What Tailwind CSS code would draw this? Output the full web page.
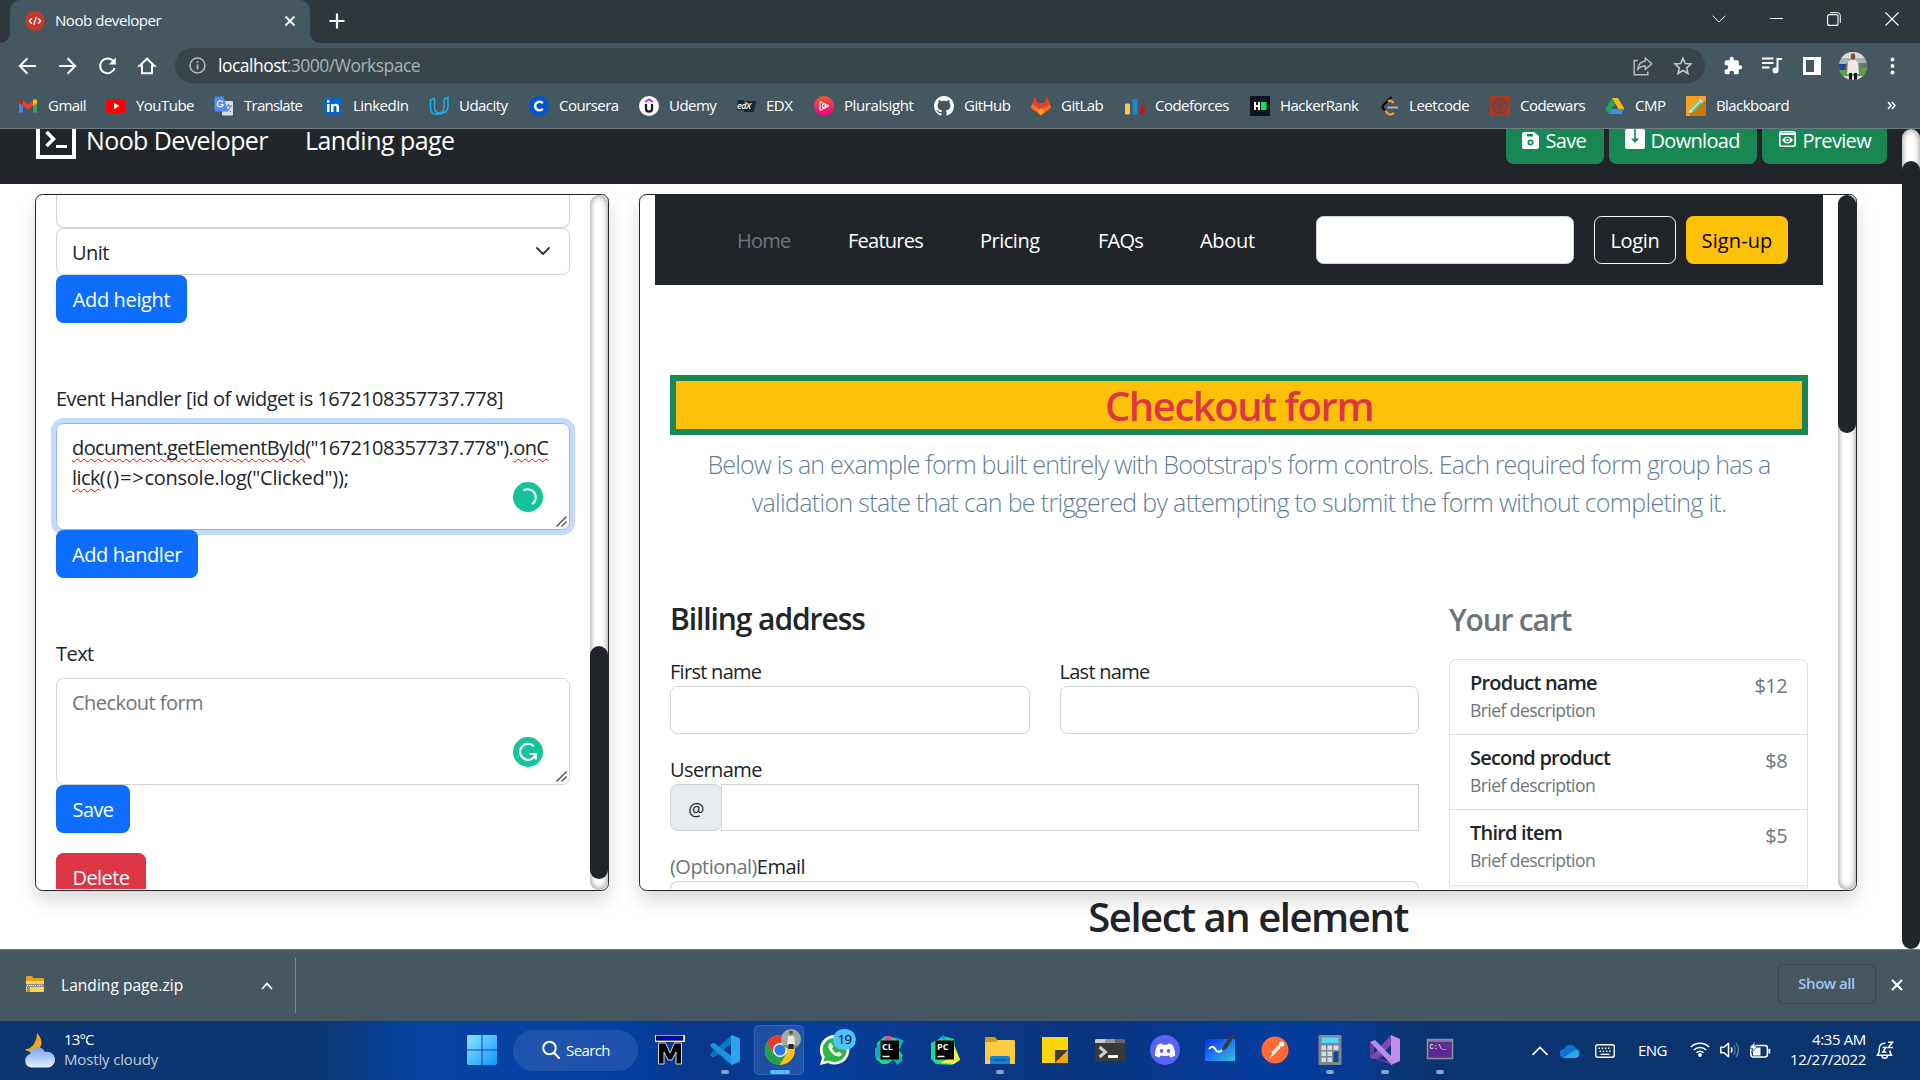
<!DOCTYPE html>
<html lang="en">
<head>
<meta charset="utf-8">
<title>Noob developer</title>
<script src="https://cdn.jsdelivr.net/npm/@tailwindcss/browser@4"></script>
</head>
<body class="w-[1920px] h-[1080px] overflow-hidden flex flex-col bg-white text-[#212529] font-['Open_Sans','Segoe_UI',sans-serif] tracking-[-0.03em] text-[20px] leading-[30px] whitespace-nowrap">

<!-- Tab strip -->
<header class="h-[43px] shrink-0 bg-[#2d373c] flex items-stretch text-white">
  <div class="w-[10px] bg-[#455760]"><div class="h-full bg-[#2d373c] rounded-br-[10px]"></div></div>
  <div class="w-[300px] bg-[#455760] rounded-t-[10px] flex items-center pl-[15px] pr-[14px] pb-[1px] text-[15px]">
    <svg class="size-5 mr-[10px]" viewBox="0 0 20 20"><circle cx="10" cy="10" r="10" fill="#c0392b"/><path d="M7 7.2 4.2 10 7 12.8M13 7.2 15.8 10 13 12.8M11.2 6.2 8.8 13.8" fill="none" stroke="#fff" stroke-width="1.3"/></svg>
    <span class="grow tracking-[-0.030em] pb-[2px]">Noob developer</span>
    <svg class="size-[12px]" viewBox="0 0 12 12"><path d="M1.5 1.5l9 9M10.500 1.500l-9 9" stroke="#fff" stroke-width="1.9"/></svg>
  </div>
  <div class="w-[10px] bg-[#455760]"><div class="h-full bg-[#2d373c] rounded-bl-[10px]"></div></div>
  <svg class="size-[16px] ml-[9px] mt-[13px]" viewBox="0 0 16 16"><path d="M8 .5v15M.5 8h15" stroke="#fff" stroke-width="2.2"/></svg>
  <div class="grow"></div>
  <div class="flex items-center gap-[44px] pr-[21px] pb-[6px]">
    <svg class="size-[14px]" viewBox="0 0 14 14"><path d="M.7 3.800 7 10l6.300-6.200" fill="none" stroke="#fff" stroke-width="1"/></svg>
    <svg class="size-[13px]" viewBox="0 0 13 13"><path d="M0 6.500h13" stroke="#fff" stroke-width="1"/></svg>
    <svg class="size-[14px]" viewBox="0 0 14 14"><rect x=".6" y="2.600" width="10.400" height="10.800" rx="2" fill="none" stroke="#fff" stroke-width="1.100"/><path d="M3 .7h7.500A2.800 2.800 0 0 1 13.300 3.500V11" fill="none" stroke="#fff" stroke-width="1"/></svg>
    <svg class="size-[14px]" viewBox="0 0 14 14"><path d="M.5.5l13 13M13.500.5l-13 13" stroke="#fff" stroke-width="1.1"/></svg>
  </div>
</header>

<!-- Address bar -->
<div class="h-[45px] shrink-0 bg-[#455760] flex items-center text-white">
  <div class="flex w-[175px] pl-[17px] gap-[20px]">
    <svg class="size-5" viewBox="0 0 20 20"><path d="M19 10H3M10.500 2.300 2.800 10l7.700 7.700" fill="none" stroke="#fff" stroke-width="2"/></svg>
    <svg class="size-5" viewBox="0 0 20 20"><path d="M2 10h16M10.500 2.300l7.700 7.700-7.700 7.700" fill="none" stroke="#fff" stroke-width="2"/></svg>
    <svg class="size-5" viewBox="0 0 20 20"><path d="M16.300 5.200A7.400 7.400 0 1 0 17.600 12" fill="none" stroke="#fff" stroke-width="2"/><path d="M18.800 1.500v7h-7z" fill="#fff"/></svg>
    <svg class="size-5" viewBox="0 0 20 20"><path d="M10 2.700 2.600 9.800H5V17.300H15V9.800h2.400z" fill="none" stroke="#fff" stroke-width="2"/></svg>
  </div>
  <div class="w-[1530px] h-[35px] rounded-full bg-[#39444b] flex items-center pl-[14px] pr-[12px] text-[17.500px]">
    <svg class="size-[17px] mr-[12px]" viewBox="0 0 17 17"><circle cx="8.500" cy="8.500" r="7.500" fill="none" stroke="#b4bbbf" stroke-width="1.500"/><path d="M8.500 7.500v5M8.500 4.300v1.800" stroke="#b4bbbf" stroke-width="1.700"/></svg>
    <div class="grow pb-[2px] tracking-[-0.029em]">localhost<span class="text-[#a9b2b6]">:3000/Workspace</span></div>
    <svg class="size-5 mr-5" viewBox="0 0 20 20"><path d="M4.500 4.500H1.200V18.800h13.600v-3.300" fill="none" stroke="#b4bbbf" stroke-width="1.500"/><path d="M12.300 2l6.500 5.700-6.500 5.700v-3.300c-3.500 0-6 1.200-7.600 3.500.5-4.500 3-8 7.600-8.600z" fill="none" stroke="#b4bbbf" stroke-width="1.500" stroke-linejoin="round"/></svg>
    <svg class="size-5" viewBox="0 0 20 20"><path d="M10 2.200l2.300 5.300 5.700.5-4.300 3.800 1.300 5.700-5-3-5 3 1.300-5.700L2 8l5.700-.5z" fill="none" stroke="#c3c9cc" stroke-width="1.600"/></svg>
  </div>
  <div class="flex items-center pl-[18px]">
    <svg class="size-5 mr-[19px]" viewBox="0 0 24 24"><path fill="#fff" d="M20.500 11H19V7a2 2 0 0 0-2-2h-4V3.500a2.500 2.500 0 0 0-5 0V5H4a2 2 0 0 0-2 2v3.800h1.500a2.700 2.700 0 0 1 0 5.400H2V20a2 2 0 0 0 2 2h3.800v-1.500a2.700 2.700 0 0 1 5.400 0V22H17a2 2 0 0 0 2-2v-4h1.500a2.500 2.500 0 0 0 0-5z"/></svg>
    <svg class="size-5 mr-[21px]" viewBox="0 0 20 20"><path d="M0 2.500h11.500M0 7h11.500M0 11.500h7.500M15.500 14.500V3H20" fill="none" stroke="#fff" stroke-width="2"/><circle cx="13.500" cy="14.500" r="3" fill="#fff"/></svg>
    <svg class="size-[18px] mr-[18px]" viewBox="0 0 18 18"><path fill="#fff" fill-rule="evenodd" d="M0 0h18v18H0zM3 3v12h8V3z"/></svg>
    <svg class="size-[28px] mr-[23px]" viewBox="0 0 28 28"><defs><clipPath id="av"><circle cx="14" cy="14" r="14"/></clipPath></defs><g clip-path="url(#av)"><rect width="28" height="28" fill="#a9b4b6"/><rect width="28" height="6" fill="#d7dcdd"/><rect y="16" width="28" height="12" fill="#57a24a"/><rect y="12" width="7" height="6" fill="#20439c"/><rect x="21" y="11" width="7" height="5" fill="#6c7478"/><path d="M3 24h22v4H3z" fill="#e9d4d6"/><path d="M9 10l3-2h4l3 2 1 12H8z" fill="#eee9e4"/><path d="M8 11l-1 9M20 11l1 9" stroke="#9b6a50" stroke-width="1.500"/><ellipse cx="14" cy="4.500" rx="2.300" ry="3.200" fill="#7d523c"/><path d="M10 21h3v7h-3zM15 21h3v7h-3z" fill="#15171c"/></g></svg>
    <svg class="w-[5px] h-[18px]" viewBox="0 0 5 18"><circle cx="2.500" cy="2.500" r="2" fill="#fff"/><circle cx="2.500" cy="9" r="2" fill="#fff"/><circle cx="2.500" cy="15.500" r="2" fill="#fff"/></svg>
  </div>
</div>

<!-- Bookmarks -->
<nav class="h-[41px] shrink-0 bg-[#455760] border-b border-[#6e7b82] flex items-center pl-[18px] pb-[6px] text-white text-[15px] tracking-[-0.035em] [&_svg]:size-5 [&_svg]:translate-y-[1px] [&>div]:flex [&>div]:gap-[10px] [&>div]:items-center [&>div]:shrink-0 [&_svg]:shrink-0">
  <div class="w-[88px]"><svg viewBox="0 0 20 20"><path d="M1 4v12.500h4V9z" fill="#4285f4"/><path d="M19 4v12.500h-4V9z" fill="#34a853"/><path d="M5 4.500l5 4 5-4v5.300l-5 3.900-5-3.900z" fill="#ea4335"/><path d="M1 5.300C1 3 3.500 2.700 5 4v5.800L1 7z" fill="#c5221f"/><path d="M19 5.300C19 3 16.500 2.700 15 4v5.800L19 7z" fill="#fbbc04"/></svg>Gmail</div>
  <div class="w-[108px]"><svg viewBox="0 0 20 20"><rect y="3" width="20" height="14" rx="3.500" fill="#f00"/><path d="M8 7l5.500 3L8 13z" fill="#fff"/></svg>YouTube</div>
  <div class="w-[109px] tracking-[-0.050em]"><svg viewBox="0 0 20 20"><rect x="8" y="5" width="11" height="14.500" rx="1" fill="#d9dde1"/><path d="M11 10h7M14.500 8v2M12 15.500c2.500-1.500 4-3 4.500-5.500M12.500 11.500c1 2 2.500 3.500 4.500 4" stroke="#6d7a86" stroke-width="1" fill="none"/><path d="M1.500.5h8l4.500 15H1.500a1 1 0 0 1-1-1v-13a1 1 0 0 1 1-1z" fill="#4f8cf0"/><path d="M8.800 6.200A3 3 0 1 0 9.200 8.500H6.500" fill="none" stroke="#fff" stroke-width="1.200"/></svg>Translate</div>
  <div class="w-[106px]"><svg viewBox="0 0 20 20"><rect x="1.500" y="1.500" width="17" height="17" rx="1" fill="#0a66c2"/><path d="M4 8h2.500v8H4zM4 4.300h2.500v2.300H4zM8 8h2.400v1.200c1.300-2.200 5.600-2 5.600 2V16h-2.500v-4.500c0-2-3-2-3 0V16H8z" fill="#fff"/></svg>LinkedIn</div>
  <div class="w-[100px]"><svg viewBox="0 0 20 20"><path d="M5.500 2 1.500 4v8c0 7 8 8 9.500 4M5.500 2v9.500c0 4.500 4 7 7 6 4-1 6.500-2.500 6.500-6.500V1.500L15 3.300V11c0 3-1.500 5.300-3.800 6.200" fill="none" stroke="#19b2e7" stroke-width="1.500"/></svg>Udacity</div>
  <div class="w-[110px]"><svg viewBox="0 0 20 20"><circle cx="10" cy="10" r="10" fill="#0056d2"/><path d="M13.700 7.300a4.300 4.300 0 1 0 0 5.400" fill="none" stroke="#fff" stroke-width="2.600"/></svg>Coursera</div>
  <div class="w-[97px]"><svg viewBox="0 0 20 20"><circle cx="10" cy="10" r="10" fill="#fff"/><path d="M6 6l4-2.600L14 6" fill="none" stroke="#a435f0" stroke-width="1.800"/><path d="M7 8v5c0 3.500 6 3.500 6 0V8" fill="none" stroke="#1c1d1f" stroke-width="2.300"/></svg>Udemy</div>
  <div class="w-[78px]"><svg viewBox="0 0 20 20"><path d="M2 4h6v10H.5zM9 5h11l-2 11H8z" fill="#14282e"/><text x="1" y="13" font-size="9" font-style="italic" font-weight="600" fill="#fff" letter-spacing="-.5">edX</text></svg>EDX</div>
  <div class="w-[120px] tracking-[-0.027em]"><svg viewBox="0 0 20 20"><defs><linearGradient id="ps" x2="0" y2="1"><stop offset="0" stop-color="#f05a28"/><stop offset="1" stop-color="#ec008c"/></linearGradient></defs><circle cx="10" cy="10" r="10" fill="url(#ps)"/><path d="M6 5.500l9 4.500-9 4.500zM8.500 8l4 2-4 2z" fill="none" stroke="#fff" stroke-width="1"/></svg>Pluralsight</div>
  <div class="w-[97px]"><svg viewBox="0 0 16 16"><path fill="#fff" d="M8 0C3.580 0 0 3.580 0 8c0 3.540 2.290 6.530 5.470 7.590.4.070.55-.170.55-.380 0-.190-.010-.820-.010-1.490-2.010.370-2.530-.490-2.690-.940-.090-.230-.480-.940-.820-1.130-.280-.150-.680-.520-.010-.530.630-.010 1.080.580 1.230.820.720 1.210 1.870.870 2.330.660.070-.520.280-.870.510-1.070-1.780-.200-3.640-.890-3.640-3.950 0-.870.310-1.590.820-2.150-.080-.200-.360-1.020.080-2.120 0 0 .670-.210 2.200.820.640-.180 1.320-.270 2-.270s1.360.090 2 .270c1.530-1.040 2.200-.820 2.200-.820.440 1.100.160 1.920.080 2.120.510.560.820 1.270.820 2.150 0 3.070-1.870 3.750-3.650 3.950.290.250.540.730.540 1.480 0 1.070-.010 1.930-.010 2.200 0 .210.150.460.550.380A8.010 8.010 0 0 0 16 8c0-4.420-3.580-8-8-8"/></svg>GitHub</div>
  <div class="w-[94px]"><svg viewBox="0 0 20 20"><path d="M4 .5 1 8 0 11l10 8.500L20 11l-1-3L16 .5 13 7H7z" fill="#e24329"/><path d="M1 8l6 4 3 7.500L0 12zM19 8l-6 4-3 7.500L20 12z" fill="#fc6d26"/><path d="M6.500 14.500 10 12l3.500 2.500L10 19.500z" fill="#fca326"/></svg>GitLab</div>
  <div class="w-[125px]"><svg viewBox="0 0 20 20"><rect x="0" y="7.500" width="5" height="11" rx="1.200" fill="#f8cc4a"/><rect x="7.500" y="3" width="5" height="15.500" rx="1.200" fill="#1e88c7"/><rect x="15" y="9.500" width="5" height="9" rx="1.200" fill="#b01f26"/></svg>Codeforces</div>
  <div class="w-[129px]"><svg viewBox="0 0 20 20"><rect width="20" height="20" fill="#0e141e"/><path d="M5 6v8M9 6v8M5 10h4" stroke="#fff" stroke-width="2"/><rect x="11" y="6" width="5.500" height="8" fill="#00ea64"/></svg>HackerRank</div>
  <div class="w-[111px] tracking-[-0.030em]"><svg viewBox="0 0 20 20"><path d="M12.500 1 4.300 9.300c-1 1-1 2.400 0 3.400l1.700 1.800" fill="none" stroke="#0b0b0b" stroke-width="2.300"/><path d="M9 5.500c2-1.800 4-.5 5.500 1.500M6.500 15l2.300 2.500c1.700 1.600 4 1.300 6-.8" fill="none" stroke="#ffa116" stroke-width="2.200"/><path d="M8.500 11.500H19" stroke="#b3b3b3" stroke-width="2"/></svg>Leetcode</div>
  <div class="w-[115px]"><svg viewBox="0 0 20 20"><rect width="20" height="20" fill="#b1361e"/><g fill="none" stroke="#5a4a50" stroke-width="1.500"><path id="cw" d="M10 10c-.5-3-3-4-5-3M10 10c2-2.500 1.500-5 0-6.500M10 10c3 .3 4.800-1.500 5.300-3.800M10 10c1.200 2.800 3.700 3.500 5.500 2.700M10 10c-1.500 2.500-.8 5 1 6.300M10 10c-3-.5-5 1-5.500 3.300"/><circle cx="10" cy="10" r="7.500"/></g></svg>Codewars</div>
  <div class="w-[81px]"><svg viewBox="0 0 20 20"><path d="M7 2h6l6.500 11h-6z" fill="#fbbc04"/><path d="M7 2 .5 13l3 5L10 7.200z" fill="#1fa463"/><path d="M6.500 13h13l-3 5h-13z" fill="#4688f4"/></svg>CMP</div>
  <div class="w-[201px] tracking-[-0.038em]"><svg viewBox="0 0 20 20"><rect width="20" height="20" fill="#f5a11c"/><path d="M3 17 20 4v16H5z" fill="#c97a06"/><path d="M3 17l1-4L14.500 2.500l3 3L7 16z" fill="#5cd0b3"/><path d="M3 17l1-4 3 3z" fill="#f4e2c4"/><path d="M14.500 2.500l3 3-1.500 1.500-3-3z" fill="#f3b6c6"/><path d="M5 14.500 15 4.500" stroke="#fff" stroke-width="1"/></svg>Blackboard</div>
  <svg class="w-[9px]!" viewBox="0 0 9 20"><path d="M1 6l3 3.500L1 13M5 6l3 3.500L5 13" fill="none" stroke="#fff" stroke-width="1.500"/></svg>
</nav>

<!-- Page viewport -->
<main class="h-[820px] shrink-0 flex overflow-hidden">
  <div class="w-[1902px] bg-white flex flex-col">
    <div class="h-[55px] bg-[#212529] text-white flex items-start pl-[36px] pr-[15.500px] text-[25px] leading-[26px] tracking-[-0.024em]">
      <svg class="w-[40px] h-[40px] -mt-[10px]" viewBox="0 0 40 40"><rect x="2" y="2" width="36" height="36" fill="none" stroke="#fff" stroke-width="4"/><path d="M10.500 13l7 7-7 7" fill="none" stroke="#fff" stroke-width="3.500"/><path d="M20 27.500h11" stroke="#fff" stroke-width="3"/></svg>
      <span class="ml-[10px] w-[219px] -mt-[2px]">Noob Developer</span>
      <span class="-mt-[2px] grow tracking-[-0.022em]">Landing page</span>
      <div class="flex gap-[5px] text-[20px] leading-[24px] -mt-[13px] tracking-[-0.034em] [&>div]:h-[48px] [&>div]:rounded-[7.500px] [&>div]:bg-[#198754] [&>div]:flex [&>div]:items-center [&>div]:pl-[16px] [&>div]:pt-[2px]">
        <div class="w-[98px]"><svg class="w-[17px] h-[17px] mr-[7px] -mt-[2px]" viewBox="0 0 17 17"><path fill="#fff" fill-rule="evenodd" d="M2 0h10l5 4v11a2 2 0 0 1-2 2H2a2 2 0 0 1-2-2V2a2 2 0 0 1 2-2zM5 2v2.500h6V2zM8.500 7.500a3 3 0 1 0 0 6 3 3 0 0 0 0-6z"/><circle cx="8.500" cy="10.500" r="1.300" fill="#fff"/></svg>Save</div>
        <div class="w-[148px]"><svg class="w-5 h-5 mr-[6px] -mt-[4px]" viewBox="0 0 20 20"><rect width="20" height="20" rx="2" fill="#fff"/><path d="M10 0v10" stroke="#198754" stroke-width="1.600"/><path d="M6 9.500h8l-4 4.500z" fill="#198754"/></svg>Download</div>
        <div class="w-[125px] pl-[17px]!"><svg class="w-[17px] h-[16px] mr-[7px] -mt-[4px]" viewBox="0 0 17 16"><rect x=".8" y=".8" width="15.400" height="14.400" rx="2" fill="none" stroke="#fff" stroke-width="1.600"/><path d="M1 3h15" stroke="#fff" stroke-width="2"/><path d="M3 9c2.500-4.500 8.500-4.500 11 0-2.500 4.500-8.500 4.500-11 0z" fill="#fff"/><circle cx="8.500" cy="9" r="2.400" fill="#198754"/><circle cx="8.500" cy="9" r="1.200" fill="#fff"/></svg>Preview</div>
      </div>
    </div>

    <div class="flex pl-[35px] pt-[10px] gap-[30px]">
      <!-- Property editor -->
      <section class="w-[574px] h-[697px] shrink-0 border border-[#212529] rounded-[7.500px] bg-white shadow-[0_10px_20px_rgba(0,0,0,0.15)] flex overflow-hidden">
        <div class="w-[554px] pl-[20px] pr-[20px] flex flex-col items-start tracking-[-0.028em]">
          <div class="w-full h-[33px] shrink-0 border border-t-0 border-[#ced4da] rounded-b-[7.500px]"></div>
          <div class="w-full h-[47px] shrink-0 border border-[#ced4da] rounded-[7.500px] flex items-center justify-between pl-[15px] pr-[18px] pt-[3px]">Unit
            <svg class="w-[16px] h-[16px] -mt-[4px]" viewBox="0 0 16 16"><path d="M2 5l6 6 6-6" fill="none" stroke="#343a40" stroke-width="2" stroke-linecap="round" stroke-linejoin="round"/></svg>
          </div>
          <button class="w-[131px] h-[48px] shrink-0 rounded-[7.500px] bg-[#0d6efd] text-white pt-[2px] tracking-[-0.018em]">Add height</button>
          <p class="mt-[61px] tracking-[-0.025em]">Event Handler [id of widget is 1672108357737.778]</p>
          <div class="relative mt-[9px] w-full h-[107px] shrink-0 border border-[#86b7fe] rounded-[7.500px] ring-[5px] ring-[#c2dbfe] pt-[9px] pl-[15px] tracking-[-0.030em] overflow-visible">
            <p><span class="underline decoration-wavy decoration-[#f00] decoration-1 underline-offset-[3px] [text-decoration-skip-ink:none]">document.getElementById</span>("1672108357737.778").<span class="underline decoration-wavy decoration-[#f00] decoration-1 underline-offset-[3px] [text-decoration-skip-ink:none]">onC</span></p>
            <p><span class="underline decoration-wavy decoration-[#f00] decoration-1 underline-offset-[3px] [text-decoration-skip-ink:none]">lick</span><span class="tracking-[0.040em]">(()=&gt;</span><span class="tracking-[-0.012em]">console.log("Clicked"));</span></p>
            <svg class="absolute size-[30px] right-[26px] bottom-[17px]" viewBox="0 0 30 30"><circle cx="15" cy="15" r="15" fill="#15c39a"/><path d="M10.500 8.500a8 8 0 0 1 8.500 13.700" fill="none" stroke="#fff" stroke-width="2"/></svg>
            <svg class="absolute size-[11px] right-[2px] bottom-[2px]" viewBox="0 0 11 11"><path d="M.5 10.500l10-10M5.500 10.500l5-5" stroke="#444" stroke-width="1.300"/></svg>
          </div>
          <button class="relative w-[142px] h-[48px] shrink-0 rounded-[7.500px] bg-[#0d6efd] text-white pt-[2px] tracking-[-0.022em]">Add handler</button>
          <p class="mt-[61px]">Text</p>
          <div class="relative mt-[9px] w-full h-[107px] shrink-0 border border-[#ced4da] rounded-[7.500px] pt-[9px] pl-[15px] text-[#6c757d]">Checkout form
            <svg class="absolute size-[30px] right-[26px] bottom-[17px]" viewBox="0 0 30 30"><circle cx="15" cy="15" r="15" fill="#15c39a"/><path d="M20.800 9.200A8 8 0 1 0 22.800 17H16.500M22.800 16.500V22.500M22 17v4" fill="none" stroke="#fff" stroke-width="2.100"/></svg>
            <svg class="absolute size-[11px] right-[2px] bottom-[2px]" viewBox="0 0 11 11"><path d="M.5 10.500l10-10M5.500 10.500l5-5" stroke="#444" stroke-width="1.300"/></svg>
          </div>
          <button class="w-[74px] h-[48px] shrink-0 rounded-[7.500px] bg-[#0d6efd] text-white pt-[2px]">Save</button>
          <div class="mt-[20px] h-[36px] overflow-hidden"><button class="w-[90px] h-[48px] rounded-[7.500px] bg-[#dc3545] text-white pt-[2px]">Delete</button></div>
        </div>
        <div class="w-[18px] rounded-[9px] shadow-[inset_0_0_6px_rgba(0,0,0,0.5)] pt-[451px]"><div class="h-[233px] rounded-[9px] bg-[#212529]"></div></div>
      </section>

      <!-- Canvas -->
      <div class="w-[1218px] shrink-0 flex flex-col">
        <section class="relative h-[697px] border border-[#212529] rounded-[7.500px] bg-white shadow-[0_10px_20px_rgba(0,0,0,0.15)] flex overflow-hidden">
          <div class="w-[1198px] shrink-0 pl-[15px] pr-[15px]">
            <div class="w-[1168px] h-[90px] bg-[#212529] text-white flex items-center pl-[82px] tracking-[-0.038em] [&>span]:shrink-0 [&>span]:pt-[2px]">
              <span class="w-[111px] text-[#6c757d]">Home</span>
              <span class="w-[132px]">Features</span>
              <span class="w-[118px] tracking-[-0.025em]">Pricing</span>
              <span class="w-[102px]">FAQs</span>
              <span class="w-[116px] tracking-[-0.015em]">About</span>
              <div class="w-[258px] h-[48px] shrink-0 bg-white border border-[#ced4da] rounded-[7.500px]"></div>
              <div class="ml-[20px] w-[82px] h-[48px] shrink-0 border border-[#f8f9fa] rounded-[7.500px] flex items-center justify-center tracking-[-0.015em] pt-[2px]">Login</div>
              <div class="ml-[10px] w-[102px] h-[48px] shrink-0 bg-[#ffc107] text-black rounded-[7.500px] flex items-center justify-center tracking-[0.005em] pt-[2px]">Sign-up</div>
            </div>
            <div class="px-[15px] pt-[90px]">
              <h2 class="w-[1138px] h-[60px] border-[6px] border-[#198754] bg-[#ffc107] text-[#dc3545] text-center font-semibold text-[40px] leading-[50px] tracking-[-0.036em] mb-[11px]">Checkout form</h2>
              <p class="w-[1138px] text-center text-[25px] leading-[37.500px] font-light text-[#62809c] tracking-[-0.034em]">Below is an example form built entirely with Bootstrap's form controls. Each required form group has a<br><span class="tracking-[-0.027em]">validation state that can be triggered by attempting to submit the form without completing it.</span></p>
              <div class="flex mt-[79px]">
                <div class="w-[749px] flex flex-col">
                  <h4 class="text-[30px] leading-[36px] font-semibold tracking-[-0.036em] h-[57px] pt-[1px]">Billing address</h4>
                  <div class="flex gap-[30px]">
                    <div class="w-[359.500px]"><p class="h-[29px] tracking-[-0.036em]">First name</p><div class="h-[48px] border border-[#ced4da] rounded-[7.500px]"></div></div>
                    <div class="w-[359.500px]"><p class="h-[29px] tracking-[-0.036em]">Last name</p><div class="h-[48px] border border-[#ced4da] rounded-[7.500px]"></div></div>
                  </div>
                  <p class="mt-[21px] h-[29px]">Username</p>
                  <div class="flex h-[47px]">
                    <div class="w-[52px] border border-[#ced4da] rounded-[7.500px] bg-[#e9ecef] flex items-center justify-center text-[18px] pt-[2px]">@</div>
                    <div class="grow -ml-px border border-[#ced4da]"></div>
                  </div>
                  <p class="mt-[21px] h-[29px] tracking-[-0.027em]"><span class="text-[#6c757d]">(Optional)</span>Email</p>
                  <div class="h-[8px] border border-b-0 border-[#ced4da] rounded-t-[7.500px]"></div>
                </div>
                <div class="w-[359px] ml-[30px]">
                  <h4 class="text-[30px] leading-[36px] font-semibold tracking-[-0.040em] text-[#6c757d] h-[59px] pt-[2px]">Your cart</h4>
                  <div class="h-[230px] border border-b-0 border-[#dfe1e3] rounded-t-[7.500px] [&>div]:h-[75px] [&>div]:flex [&>div]:justify-between [&>div]:px-[20px] [&>div]:border-b [&>div]:border-[#dfe1e3] [&_h6]:font-semibold [&_h6]:leading-[24px] [&_h6]:tracking-[-0.040em] [&_h6]:mt-[11px] [&_small]:block [&_small]:text-[17.500px] [&_small]:leading-[30px] [&_small]:tracking-[-0.032em] [&_small]:text-[#6c757d] [&_span]:mt-[11px] [&_span]:text-[#6c757d]">
                    <div><div><h6>Product name</h6><small>Brief description</small></div><span>$12</span></div>
                    <div><div><h6>Second product</h6><small>Brief description</small></div><span>$8</span></div>
                    <div class="h-[76px]!"><div><h6>Third item</h6><small>Brief description</small></div><span>$5</span></div>
                    <p class="h-[4px] bg-[#f8f9fa]"></p>
                  </div>
                </div>
              </div>
            </div>
          </div>
          <div class="w-[18px] shrink-0 rounded-[9px] shadow-[inset_0_0_6px_rgba(0,0,0,0.5)]"><div class="h-[238px] rounded-[9px] bg-[#212529]"></div></div>
        </section>
        <h2 class="text-center text-[40px] leading-[48px] font-semibold tracking-[-0.036em] mt-[2px]">Select an element</h2>
      </div>
    </div>
  </div>
  <div class="w-[18px] bg-[#212529]"><div class="h-[50px] bg-white rounded-t-[9px] shadow-[inset_0_0_6px_rgba(0,0,0,0.5)] flex items-end"><div class="w-full h-[18px] rounded-t-[9px] bg-[#212529]"></div></div><div class="h-[770px] bg-white"><div class="h-full bg-[#212529] rounded-b-[9px]"></div></div></div>
</main>

<!-- Download shelf -->
<div class="h-[72px] shrink-0 bg-[#455760] border-t border-[#6e7b82] flex items-center text-white text-[15px]">
  <svg class="w-[18px] h-[18px] ml-[26px] mr-[17px] -mt-[4px]" viewBox="0 0 18 18"><path d="M0 2a1 1 0 0 1 1-1h5l1.500 2H17a1 1 0 0 1 1 1v5H0z" fill="#e0a11b"/><path d="M0 6h18v10a1 1 0 0 1-1 1H1a1 1 0 0 1-1-1z" fill="#fbd158"/><path d="M0 9h18v3H4v5H1v-5H0z" fill="#8b8f93"/><path d="M1 10.500h16" stroke="#fff" stroke-width="1" stroke-dasharray="1 1"/></svg>
  <span class="w-[200px] text-[15.500px] tracking-[0.003em] -mt-[1px]">Landing page.zip</span>
  <svg class="w-[12px] h-[12px]" viewBox="0 0 12 12"><path d="M1 9l5-5.500L11 9" fill="none" stroke="#fff" stroke-width="1.800"/></svg>
  <div class="ml-[22px] w-px h-[55px] bg-[#7d8a91]"></div>
  <div class="grow"></div>
  <div class="w-[98px] h-[40px] rounded-[5px] border border-[#3a4449] text-[#a3c4f9] font-semibold text-center leading-[37px] tracking-[-0.032em] -mt-[3px] pr-[1px]">Show all</div>
  <svg class="w-[12px] h-[12px] ml-[15px] mr-[17px] -mt-[2px]" viewBox="0 0 12 12"><path d="M1 1l10 10M11 1 1 11" stroke="#fff" stroke-width="2.200"/></svg>
</div>

<!-- Taskbar -->
<footer class="h-[59px] shrink-0 flex items-center text-white text-[15px] bg-[linear-gradient(90deg,#0c3570_0px,#0c3874_320px,#0843a3_420px,#053fa4_620px,#0a3788_700px,#063fa0_800px,#0b3886_960px,#0a3580_1090px,#053c9e_1270px,#063a93_1350px,#0b346f_1420px,#0c3570_1920px)]">
  <svg class="w-[32px] h-[37px] ml-[24px] mr-[8px] shrink-0 -mt-[2px]" viewBox="0 0 32 37"><defs><linearGradient id="cl" x2="0" y2="1"><stop offset="0" stop-color="#7aa2ea"/><stop offset="1" stop-color="#e4effc"/></linearGradient></defs><path d="M13 2c5 5 6 12 2 16-4 4-11 4-14 0C8 19 13 10 13 2z" fill="#f5a623"/><path d="M7 36.500a7 7 0 0 1-1-13.500 8 8 0 0 1 15-2 8 8 0 0 1 4 15.500z" fill="url(#cl)"/></svg>
  <div class="w-[403px] leading-[20px] -mt-[3px]"><p class="tracking-[-0.055em]">13°C</p><p class="text-[#c0ccdc] tracking-[-0.010em]">Mostly cloudy</p></div>
  <svg class="w-[30px] h-[30px] shrink-0 -mt-px" viewBox="0 0 30 30"><defs><linearGradient id="wn" x2="1" y2="1"><stop offset="0" stop-color="#8fe6ff"/><stop offset="1" stop-color="#0a95fb"/></linearGradient></defs><path d="M1 0h13.500v14.500H0V1zM15.500 0H29l1 1v13.500H15.500zM0 15.500h14.500V30H1l-1-1zM15.500 15.500H30V29l-1 1H15.500z" fill="url(#wn)"/></svg>
  <div class="ml-[16px] w-[125px] h-[41px] rounded-full bg-white/10 flex items-center pl-[29px] shrink-0 -mt-px">
    <svg class="w-[18px] h-[20px] mr-[6px]" viewBox="0 0 18 20"><circle cx="7.500" cy="8" r="6.300" fill="none" stroke="#fff" stroke-width="2"/><path d="M12 12.800l5 5.200" stroke="#fff" stroke-width="2.200" stroke-linecap="round"/></svg>Search
  </div>
  <div class="ml-[4px] flex h-full [&>div]:w-[55px] [&>div]:flex [&>div]:flex-col [&>div]:items-center [&>div]:pt-[14px] [&>div]:shrink-0 [&_i]:block [&_i]:w-[8px] [&_i]:h-[4px] [&_i]:mt-[5px] [&_i]:rounded-full [&_i]:bg-[#8fa3c8]">
    <div><svg class="size-[30px]" viewBox="0 0 30 30"><rect x=".5" y=".5" width="29" height="6" fill="#c9c3b4" stroke="#e8e4da"/><rect x="1.500" y="1.200" width="26" height="3.800" fill="#00f" stroke="#000"/><path d="M3.500 29V8h7l4.500 10 4.500-10h7v21h-5.500V17l-4 8h-4l-4-8v12z" fill="#000" stroke="#d9d5c8"/></svg></div>
    <div><svg class="size-[30px]" viewBox="0 0 30 30"><path d="M22 0 21 9 3.500 22.500.5 20.500 0 19z" fill="#0879c4"/><path d="M21.500 30V21L3.500 7.500.5 9.500v2z" fill="#1b93de"/><path d="M22 0l8 3.500v23L22 30l-1-1V1z" fill="#2aa4ee"/></svg><i></i></div>
    <div class="relative"><span class="absolute left-[2px] top-[4px] w-[50px] h-[50px] rounded-[5px] bg-white/10 border border-white/10"></span><svg class="relative size-[30px] overflow-visible" viewBox="0 0 30 30"><circle cx="15" cy="15" r="15" fill="#fbc116"/><path d="M2 7.500A15 15 0 0 1 28 7.500H15L8.500 18.700z" fill="#e33b2e"/><path d="M2 7.500A15 15 0 0 0 14.500 30L21.500 18.700 8.500 18.700z" fill="#229f4c"/><circle cx="15" cy="15" r="7" fill="#fff"/><circle cx="15" cy="15" r="5.600" fill="#2a7bea"/><circle cx="26" cy="4" r="10" fill="#9daaa2"/><path d="M18 10a10 10 0 0 0 16 0z" fill="#6b9a63"/><path d="M23 1h6l1 9h-8z" fill="#eae5df"/><circle cx="26" cy="-2.500" r="2" fill="#7a4a38"/><path d="M23.500 9h5v5h-5z" fill="#292a30"/></svg><i class="relative w-[20px]! bg-[#4cc2ff]!"></i></div>
    <div class="relative"><svg class="size-[30px]" viewBox="0 0 30 30"><path d="M0 30l2-7.500A14.800 14.800 0 1 1 8 28z" fill="#fff"/><path d="M3.500 26.500l1.300-4.700A12 12 0 1 1 9 25.500z" fill="#2bb741"/><path d="M10 8c-3 2-1.500 6 1.500 9.500s7.500 5.500 9.500 3c1.500-1.500.5-2.500-2-3.500-1.500-.5-1.500 1-2.500 1-2-.8-3.500-2.500-4.500-4.500.3-.8 1.300-1.200.8-2.500C12 9 11.500 7.500 10 8z" fill="#fff"/></svg><span class="absolute left-[26px] top-[8px] w-[23px] h-[21px] rounded-full bg-[#4cc2ff] text-black text-[13px] leading-[20px] text-center">19</span></div>
    <div><svg class="size-[30px]" viewBox="0 0 30 30"><path d="M2 8 10 1l6 1 12 3-2 6-2 4 4 6-6 6-4-2-6 4H7L1 24z" fill="#21d789"/><path d="M10 1l6 0 1 5h-6z" fill="#ec4899"/><path d="M18 24l4 6 6-5-4-5zM20 2l9 4-5 5z" fill="#0fb3a5"/><path d="M0 14l5-6v16l-5-2z" fill="#18a6c9"/><rect x="5.500" y="5.500" width="18.500" height="19" fill="#000"/><text x="7" y="15" font-size="9" font-weight="700" fill="#fff" letter-spacing="0">CL</text><path d="M7.500 21.500h7" stroke="#fff" stroke-width="1.500"/></svg></div>
    <div><svg class="size-[30px]" viewBox="0 0 30 30"><path d="M1 8l8-4 4-3 11 3 1 8 5 12-8 6-16-1-5-5z" fill="#21d789"/><path d="M24 10l6 15-6 4-14-1 12-6z" fill="#f3ec4a"/><path d="M9 3l5-3 2 5z" fill="#0a9bd8"/><rect x="5.500" y="5.500" width="18.500" height="19" fill="#000"/><text x="7" y="15" font-size="9" font-weight="700" fill="#fff" letter-spacing="0">PC</text><path d="M7.500 21.500h7" stroke="#fff" stroke-width="1.500"/></svg></div>
    <div><svg class="size-[30px]" viewBox="0 0 30 30"><path d="M0 3a1 1 0 0 1 1-1h9l3 3.500V9H0z" fill="#dc9a06"/><path d="M0 7h10l3-2h16l1 1v23H0z" fill="#fdcb45"/><path d="M5 29v-6a2 2 0 0 1 2-2h16a2 2 0 0 1 2 2v6z" fill="#1382d2"/><path d="M8 25h14" stroke="#0a5a9c" stroke-width="1.300"/></svg><i></i></div>
    <div><svg class="size-[30px]" viewBox="0 0 30 30"><path d="M2 2h26v13l-13 13H2z" fill="#ffd60a"/><path d="M15 28V15h13z" fill="#3b3a39"/><path d="M28 15v13H15z" fill="#f0a800"/></svg></div>
    <div><svg class="size-[30px]" viewBox="0 0 30 30"><path d="M0 5a1 1 0 0 1 1-1h28a1 1 0 0 1 1 1v20a1 1 0 0 1-1 1H1a1 1 0 0 1-1-1z" fill="#3a3a3a"/><path d="M0 8V5l1-1h9v4z" fill="#ccc"/><path d="M10 4h10v4H10z" fill="#999"/><path d="M20 4h9l1 1v3H20z" fill="#666"/><path d="M4.500 12l6 5-6 5" fill="none" stroke="#ccc" stroke-width="3"/><path d="M13 21.500h10" stroke="#fff" stroke-width="2.800"/></svg></div>
    <div><svg class="size-[30px]" viewBox="0 0 30 30"><circle cx="15" cy="15" r="15" fill="#5865f2"/><path d="M12 8.500c-2 .3-3.500.8-4.500 1.500-2 3.500-3 7-2.500 10.500 1.500 1.200 3 1.800 4.500 2l1.300-2c2.800.6 5.600.6 8.400 0l1.300 2c1.500-.2 3-.8 4.500-2 .5-3.500-.5-7-2.500-10.500-1-.7-2.500-1.200-4.500-1.500l-.8 1.300h-4.400z" fill="#fff"/><ellipse cx="11.500" cy="16" rx="1.800" ry="2" fill="#5865f2"/><ellipse cx="18.500" cy="16" rx="1.800" ry="2" fill="#5865f2"/></svg></div>
    <div><svg class="size-[30px]" viewBox="0 0 30 30"><defs><linearGradient id="wb" x2="1" y2="1"><stop offset="0" stop-color="#0a2bff"/><stop offset="1" stop-color="#31c4e0"/></linearGradient></defs><rect y="4" width="30" height="22" rx="1" fill="url(#wb)"/><path d="M4 14c3-4 5-2 6.500.5s4 3.500 7 .5" fill="none" stroke="#fff" stroke-width="2"/><path d="M17 16l1-4.500L26 0l3 2-7.500 11.500z" fill="#3a3a3a"/></svg></div>
    <div><svg class="size-[30px]" viewBox="0 0 30 30"><circle cx="15" cy="15" r="13.500" fill="#ff6c37"/><path d="M9 24l3-5 7-8 1.500 1.500-7 7.500z" fill="#fff"/><circle cx="21.500" cy="9" r="2.600" fill="#fff"/><path d="M12 18l7-7" stroke="#fff" stroke-width="1.800"/></svg></div>
    <div><svg class="size-[30px]" viewBox="0 0 30 30"><rect x="3.500" width="23" height="30" rx="1.500" fill="#7e8790"/><rect x="6.500" y="2.500" width="17" height="5.500" fill="#4fd8f7"/><path d="M6.500 10.500h4.500V15H6.500zM12.500 10.500h4.500V15h-4.500zM18.500 10.500h5V15h-5zM6.500 16.500h4.500V21H6.500zM12.500 16.500h4.500V21h-4.500zM6.500 22.500h4.500V27H6.500zM12.500 22.500h4.500V27h-4.500z" fill="#d4dce3"/><path d="M18.500 16.500h5V27h-5z" fill="#0c4a8a"/></svg><i></i></div>
    <div><svg class="size-[30px]" viewBox="0 0 30 30"><path d="M0 7l6 1 15 20 1 2L5 24 0 23z" fill="#6b3fa0" opacity=".9"/><path d="M4 9.500v11l5-5.500z" fill="#0a3788"/><path d="M9 24l8-7 4 10z" fill="#0a3788"/><path d="M0 23 21 0l1 9L6 24z" fill="#7a4bb5"/><path d="M0 7l5-2 17 17v8z" fill="#b98be6"/><path d="M21 0l9 4v22l-9 4z" fill="#c48cf0"/></svg><i></i></div>
    <div><svg class="size-[30px]" viewBox="0 0 30 30"><rect x="2.500" y="4.500" width="25" height="19" fill="#5c2d91" stroke="#8a8f99" stroke-width="1.500"/><path d="M3 6h24" stroke="#8a8f99" stroke-width="1.500"/><text x="4.500" y="13.500" font-size="7" fill="#fff" letter-spacing="0" font-family="Liberation Mono">C:\_</text></svg><i></i></div>
  </div>
  <div class="flex items-center ml-[65px] shrink-0">
    <svg class="w-[16px] h-[16px]" viewBox="0 0 16 16"><path d="M.5 12 8 4.500 15.500 12" fill="none" stroke="#fff" stroke-width="1.600"/></svg>
    <svg class="w-[20px] h-[14px] ml-[12px]" viewBox="0 0 20 14"><path d="M4 14a4.500 4.500 0 0 1 0-9A6.500 6.500 0 0 1 16 4.500 4.800 4.800 0 0 1 15.500 14z" fill="#0f6fcb"/><path d="M3 13.800 16 5.500A4.500 4.500 0 0 1 15.500 14H4z" fill="#28a8ea"/></svg>
    <svg class="w-[20px] h-[14px] ml-[15px]" viewBox="0 0 20 14"><rect x=".7" y=".7" width="18.600" height="12.600" rx="2" fill="none" stroke="#fff" stroke-width="1.400"/><path d="M3.500 4.300h13M4.500 7.200h12" stroke="#fff" stroke-width="1.500" stroke-dasharray="1.500 1.700"/><path d="M5.500 10.300h9" stroke="#fff" stroke-width="1.300"/></svg>
    <span class="ml-[23px] w-[52px] tracking-[-0.034em] pb-[2px]">ENG</span>
    <svg class="w-[20px] h-[16px] -mt-[3px]" viewBox="0 0 20 16"><path d="M.8 6a13 13 0 0 1 18.400 0M3.800 9a9 9 0 0 1 12.400 0M6.500 11.800a5 5 0 0 1 7 0" fill="none" stroke="#fff" stroke-width="1.500"/><circle cx="10" cy="14" r="1.900" fill="#fff"/></svg>
    <svg class="w-[20px] h-[16px] ml-[10px] -mt-[1px]" viewBox="0 0 20 16"><path d="M.8 5.300H4L8.500 1.200V14.800L4 10.700H.8z" fill="none" stroke="#fff" stroke-width="1.500" stroke-linejoin="round"/><path d="M11 5.500a4 4 0 0 1 0 5" fill="none" stroke="#fff" stroke-width="1.400"/><path d="M13.500 3.500a7 7 0 0 1 0 9M16 1a11 11 0 0 1 0 14" fill="none" stroke="#5c7aa6" stroke-width="1.400"/></svg>
    <svg class="w-[21px] h-[17px] ml-[10px] -mt-[3px]" viewBox="0 0 21 17"><rect x=".9" y="4.500" width="16.500" height="11.500" rx="2.500" fill="none" stroke="#fff" stroke-width="1.600"/><path d="M18.500 8h1.800v4.500h-1.800zM7 6.500h3.500v8H3v-5z" fill="#fff"/><path d="M5 0 0 7.500h3L1.500 12l6-7h-3z" fill="#fff" stroke="#0c3570" stroke-width=".6"/></svg>
    <div class="w-[95px] text-right leading-[20px] tracking-[-0.024em] -mt-[4px]"><p>4:35 AM</p><p>12/27/2022</p></div>
    <svg class="w-[18px] h-[19px] ml-[10px]" viewBox="0 0 18 19"><path d="M9.500 2.200C5 1.800 3.200 5 3.200 8v3L1.500 14.200h14L14 11V9.500M6 15c.5 3 5 3 5.500 0" fill="none" stroke="#fff" stroke-width="1.500"/><path d="M6.500 6.500h3.500L6.800 11h3.500M12 1.200h4.500L12.300 6.500H17" fill="none" stroke="#fff" stroke-width="1.500"/></svg>
  </div>
</footer>
</body>
</html>
